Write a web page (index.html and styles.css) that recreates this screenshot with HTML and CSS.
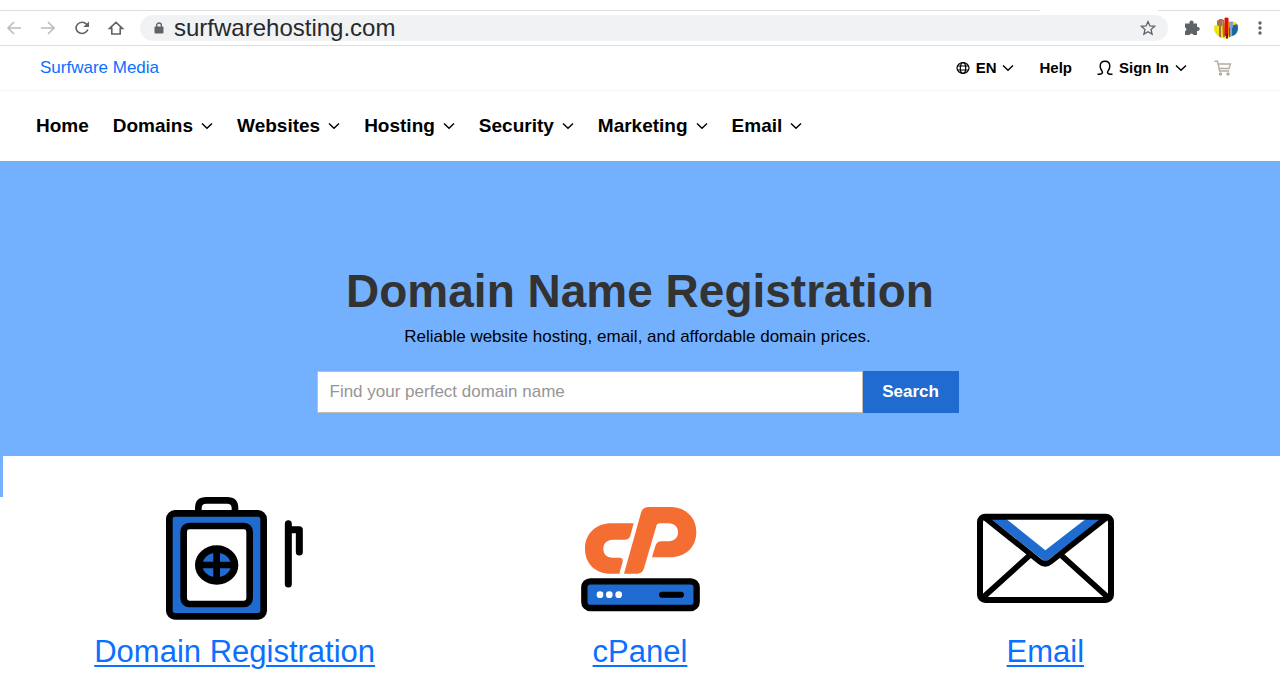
FILE: index.html
```html
<!doctype html>
<html lang="en">
	<head>
		<meta charset="UTF-8" />
		<meta name="viewport" content="width=device-width, initial-scale=1.0" />
		<title>Surfware Media</title>
		<link rel="stylesheet" href="styles.css">
	</head>
	<body>
		<svg class="sprite" aria-hidden="true">
			<symbol id="chevron" viewBox="0 0 12 8">
				<path d="M1 1.5 6 6.3 11 1.5" fill="none" stroke="currentColor" stroke-width="1.4" />
			</symbol>
		</svg>

		<div class="browser">
			<div class="tab-strip">
				<span class="tab-line grow"></span>
				<span class="tab-line"></span>
			</div>
			<div class="toolbar">
				<button class="tool faded" aria-label="Back">
					<svg width="16" height="16" viewBox="0 0 16 16"><path d="M15 8H2M8 2 2 8l6 6" /></svg>
				</button>
				<button class="tool faded" aria-label="Forward">
					<svg width="16" height="16" viewBox="0 0 16 16"><path d="M1 8h13M8 2l6 6-6 6" /></svg>
				</button>
				<button class="tool" aria-label="Reload">
					<svg width="16" height="16" viewBox="0 0 16 16">
						<path d="M13.8 9.6A6 5.6 0 1 1 12.6 4.2L14 5.6" />
						<path class="solid" d="M15 1.5V7H9.3z" />
					</svg>
				</button>
				<button class="tool" aria-label="Home page">
					<svg width="16" height="16" viewBox="0 0 16 16">
						<path d="M1.6 8.4 8 2.4l6.4 6H12.2V14H3.8V8.4z" />
					</svg>
				</button>
				<div class="address">
					<svg class="lock" width="10" height="12" viewBox="0 0 10 12">
						<path d="M2.6 5.5V3.4a2.4 2.4 0 0 1 4.8 0v2.1" fill="none" stroke="#5f6368" stroke-width="1.3" />
						<rect x=".5" y="4.6" width="9" height="7" rx="1" fill="#5f6368" />
					</svg>
					<input type="text" value="surfwarehosting.com" aria-label="Address" />
					<button aria-label="Bookmark">
						<svg width="16" height="16" viewBox="0 0 16 16">
							<path
								d="M8 1.6 9.9 6l4.7.4-3.6 3.1 1.1 4.6L8 11.7l-4.1 2.4L5 9.5 1.4 6.4 6.1 6z"
								fill="none"
								stroke="#5f6368"
								stroke-width="1.3"
							/>
						</svg>
					</button>
				</div>
				<div class="tools">
					<button class="tool" aria-label="Extensions">
						<svg width="16" height="16" viewBox="0 0 16 16">
							<path
								class="solid"
								d="M1 3.4h4.6a2.1 2.1 0 1 1 3.800 0H13v3.500a2.100 2.100 0 1 1 0 4V15H9.400a2 2 0 0 0-3.900 0H1v-3.800a2 2 0 0 0 0-3.800z"
							/>
						</svg>
					</button>
					<button class="tool" aria-label="Profile">
						<svg width="24" height="22" viewBox="0 0 24 22">
							<clipPath id="avatar"><ellipse cx="12" cy="11" rx="12" ry="10.5" /></clipPath>
							<g clip-path="url(#avatar)">
								<path class="flat" fill="#fff" d="M0 0h24v22H0z" />
								<path class="flat" fill="#ece60a" d="M0 9l5-2 12-3 7 2v9l-8 5-4 2H0z" />
								<path class="flat" fill="#17699f" d="M15 9l9-2v10l-9 3z" />
								<path class="flat" fill="#a86f4c" d="M3 2h5v7H7v12H5V9L3 8zM8 2l2 1 1 17H9z" />
								<path class="flat" fill="#8f9cc4" d="M15 5h4v5l-1 1v8h-2v-8l-1-1z" />
								<rect x="10.500" y="0" width="4" height="19" rx="1.500" fill="#e80707" />
								<rect x="12" y="17" width="2" height="5" fill="#751515" />
							</g>
						</svg>
					</button>
					<button class="tool" aria-label="Menu">
						<svg width="16" height="16" viewBox="0 0 16 16">
							<circle class="solid" cx="8" cy="3" r="1.7" />
							<circle class="solid" cx="8" cy="8" r="1.7" />
							<circle class="solid" cx="8" cy="13" r="1.7" />
						</svg>
					</button>
				</div>
			</div>
		</div>

		<header>
			<div class="topbar">
				<a href="#" class="brand">Surfware Media</a>
				<div class="account">
					<button class="lang">
						<svg width="14" height="12" viewBox="0 0 14 12" fill="none" stroke="currentColor" stroke-width="1.2">
							<ellipse cx="7" cy="6" rx="6" ry="5.3" />
							<ellipse cx="7" cy="6" rx="2.7" ry="5.3" />
							<path d="M1.5 4h11M1.5 8h11" />
						</svg>
						EN
						<svg class="chevron" width="12" height="8"><use href="#chevron" /></svg>
					</button>
					<a href="#">Help</a>
					<button class="sign-in">
						<svg width="16" height="16" viewBox="0 0 16 16" fill="none" stroke="currentColor" stroke-width="1.5">
							<path d="M.5 14.3c2.300 0 5-.3 5-2.100C5.500 10.900 3.200 9.500 3.200 6.200 3.200 3.200 5.100 1.300 8 1.300s4.800 1.900 4.800 4.900c0 3.300-2.300 4.700-2.300 6 0 1.800 2.700 2.100 5 2.100" />
						</svg>
						Sign In
						<svg class="chevron" width="12" height="8"><use href="#chevron" /></svg>
					</button>
					<a href="#" class="cart" aria-label="Cart">
						<svg width="18" height="16" viewBox="0 0 18 16" fill="none" stroke="currentColor" stroke-width="1.4">
							<path d="M.5 1.300h3L5.600 11h9.600M4.200 4h12.300L15 8.500H5.200" />
							<circle cx="6.500" cy="14" r="1" fill="currentColor" />
							<circle cx="14" cy="14" r="1" fill="currentColor" />
						</svg>
					</a>
				</div>
			</div>

			<nav>
				<a href="#">Home</a>
				<a href="#">Domains <svg class="chevron" width="12" height="8"><use href="#chevron" /></svg></a>
				<a href="#">Websites <svg class="chevron" width="12" height="8"><use href="#chevron" /></svg></a>
				<a href="#">Hosting <svg class="chevron" width="12" height="8"><use href="#chevron" /></svg></a>
				<a href="#">Security <svg class="chevron" width="12" height="8"><use href="#chevron" /></svg></a>
				<a href="#">Marketing <svg class="chevron" width="12" height="8"><use href="#chevron" /></svg></a>
				<a href="#">Email <svg class="chevron" width="12" height="8"><use href="#chevron" /></svg></a>
			</nav>
		</header>

		<main>
			<section class="hero">
				<h1>Domain Name Registration</h1>
				<div class="lookup">
					<p>Reliable website hosting, email, and affordable domain prices.</p>
					<form class="search">
						<input type="text" placeholder="Find your perfect domain name" aria-label="Domain name" />
						<button type="submit">Search</button>
					</form>
				</div>
			</section>

			<section class="features">
				<article>
					<svg width="140" height="124" viewBox="255 51 420 372" fill="none" stroke="#000" stroke-width="20">
						<path d="M355 95V84q0-23 24-23h62q24 0 24 23v11" />
						<rect x="268" y="100" width="283" height="309" rx="17" fill="#1f6bd0" />
						<rect x="311" y="138" width="198" height="234" rx="17" fill="#fff" />
						<ellipse cx="410" cy="255" rx="54" ry="48" fill="#1f6bd0" stroke-width="22" />
						<path d="M410 205v100M355 255h110" />
						<path d="M625 131v181M625 149h33v67" stroke-width="21" stroke-linecap="round" stroke-linejoin="round" />
					</svg>
					<a href="#">Domain Registration</a>
				</article>
				<article>
					<svg width="140" height="124" viewBox="30 21 420 372">
						<g fill="#f46d32">
							<path d="M221 100h-66c-46 0-80 30-80 76 0 45 32 75 77 75h26l10-36q2-12-10-12h-20c-18 0-28-11-28-27s11-27 29-27h35q13 0 17-12z" />
							<path d="M192 251 243 68q5-17 23-17h64c46 0 79 30 79 75 0 46-33 76-79 76h-54l10-34q4-14 18-14h22c17 0 28-11 28-27s-11-27-28-27h-26q-9 0-11 8l-37 127q-5 16-20 16z" />
						</g>
						<rect x="73" y="274" width="337" height="80" rx="18" fill="#1f6bd0" stroke="#000" stroke-width="19" />
						<g fill="#fff">
							<circle cx="120" cy="314" r="10" />
							<circle cx="148" cy="314" r="10" />
							<circle cx="176" cy="314" r="10" />
						</g>
						<rect x="297" y="305" width="75" height="18" rx="9" />
					</svg>
					<a href="#">cPanel</a>
				</article>
				<article>
					<svg width="140" height="124" viewBox="45 21 420 372" fill="none" stroke="#000" stroke-width="17">
						<path d="M92 86h46l118 95L378 86h50L256 216z" fill="#1f6bd0" stroke="none" />
						<path d="M66 325 208 197M447 325 305 197" />
						<path d="M76 84 240 215q16 13 32 0L438 84" />
						<rect x="60" y="80" width="393" height="250" rx="16" stroke-width="18" />
					</svg>
					<a href="#">Email</a>
				</article>
			</section>
		</main>
	</body>
</html>
```
FILE: styles.css
```css
:root {
	--color-text: #000000;
	--color-link: #0a70ff;
	--color-hero: #73b1ff;
	--color-button: #1f6bd0;
	--color-heading: #333333;
	--color-grey: #5f6368;
	--color-line: #dedfe1;
}

* {
	box-sizing: border-box;
}

body {
	margin: 0;
	background-color: #ffffff;
	color: var(--color-text);
	font-family: 'Liberation Sans', Arial, sans-serif;
	font-size: 17px;
	line-height: 20px;
}

h1,
p {
	margin: 0;
}

a {
	color: inherit;
	text-decoration: none;
}

button,
input {
	padding: 0;
	border: none;
	background: none;
	color: inherit;
	font: inherit;
}

svg {
	display: block;
	flex: none;
}

.sprite {
	position: absolute;
	width: 0;
	height: 0;
}

/* Browser bar */

.tab-strip {
	display: flex;
	gap: 118px;
	padding-top: 10px;
}

.tab-line {
	width: 122px;
	border-top: 1px solid var(--color-line);
}

.tab-line.grow {
	flex: 1;
}

.toolbar {
	display: flex;
	align-items: center;
	gap: 18px;
	height: 35px;
	padding: 0 12px 0 6px;
	border-bottom: 1px solid var(--color-line);
}

.tools {
	display: flex;
	align-items: center;
	gap: 14px;
}

.tool path {
	fill: none;
	stroke: var(--color-grey);
	stroke-width: 1.6;
}

.tool.faded path {
	stroke: #b9bbbe;
}

.tool .solid {
	fill: var(--color-grey);
	stroke: none;
}

.tool .flat {
	fill: revert-layer;
	stroke: none;
}

.address {
	flex: 1;
	display: flex;
	align-items: center;
	height: 26px;
	padding: 0 12px 0 14px;
	margin: 0 -2px;
	border-radius: 13px;
	background-color: #f0f2f4;
}

.address input {
	flex: 1;
	min-width: 0;
	margin-left: 10px;
	color: #27292c;
	font-size: 24px;
	line-height: 26px;
}

/* Header */

.topbar {
	display: flex;
	align-items: center;
	justify-content: space-between;
	height: 45px;
	padding: 0 48px 0 40px;
	border-bottom: 1px solid #f5f5f5;
}

.brand {
	color: var(--color-link);
}

.account {
	display: flex;
	align-items: center;
	gap: 25px;
	font-size: 15px;
	font-weight: 700;
}

.account button {
	display: flex;
	align-items: center;
	gap: 6px;
}

.account .sign-in {
	margin-right: 2px;
}

.cart {
	color: #b5aca0;
}

nav {
	display: flex;
	align-items: center;
	gap: 24px;
	height: 70px;
	padding: 0 36px;
	font-size: 19px;
	font-weight: 700;
}

nav a {
	display: flex;
	align-items: center;
	gap: 8px;
}

/* Hero */

.hero {
	padding: 105px 16px 43px;
	background-color: var(--color-hero);
	text-align: center;
}

.hero h1 {
	color: var(--color-heading);
	font-size: 46px;
	line-height: 50px;
}

.lookup {
	margin-top: 11px;
	padding-right: 5px;
}

.search {
	display: flex;
	max-width: 642px;
	height: 42px;
	margin: 24px auto 0;
}

.search input {
	flex: 1;
	min-width: 0;
	padding: 0 12px;
	border: 1px solid #c5bdb2;
	background-color: #ffffff;
}

.search input::placeholder {
	color: #969696;
}

.search button {
	width: 96px;
	background-color: var(--color-button);
	color: #ffffff;
	font-weight: 700;
}

/* Features */

.features {
	position: relative;
	display: grid;
	grid-template-columns: repeat(3, 1fr);
	padding: 41px 32px 20px;
}

.features::before {
	content: '';
	position: absolute;
	top: 0;
	left: 0;
	width: 3px;
	height: 41px;
	background-color: var(--color-hero);
}

.features article {
	display: flex;
	flex-direction: column;
	align-items: center;
	gap: 13px;
}

.features a {
	color: var(--color-link);
	font-size: 31px;
	line-height: 36px;
	text-decoration: underline;
	text-decoration-thickness: 2px;
	text-underline-offset: 3px;
}
```
